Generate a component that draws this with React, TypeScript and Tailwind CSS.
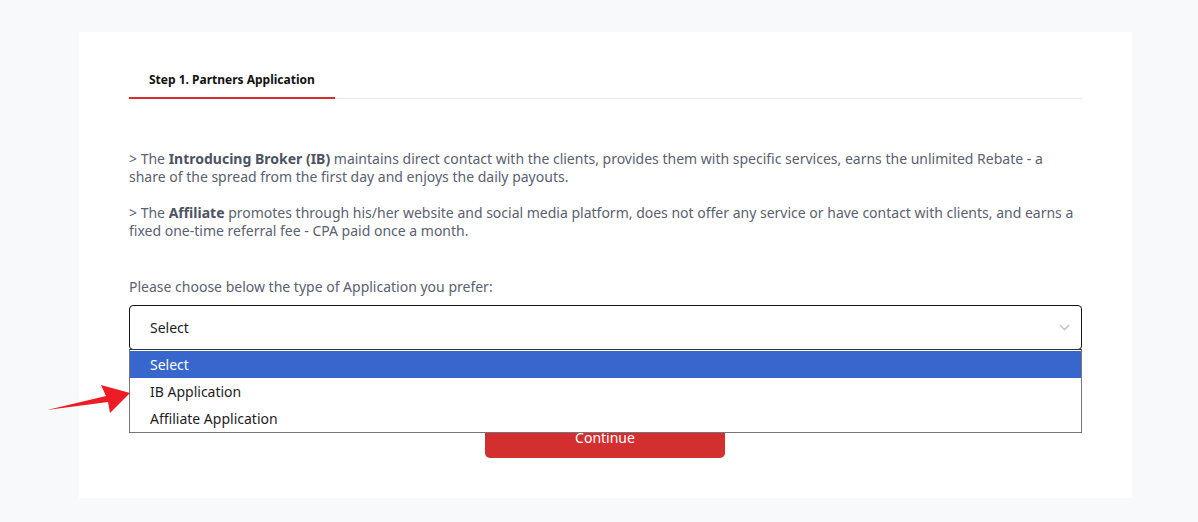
import { ChevronDown } from "lucide-react"

const options = ["Select", "IB Application", "Affiliate Application"]

export default function App() {
  return (
    <div
      className="relative min-h-[522px] bg-[#f8f9fb] pt-[32px] pb-[25px]"
      style={{ fontFamily: '"Noto Sans", "Open Sans", sans-serif' }}
    >
      <div className="ml-[79px] w-[1053px] bg-white px-[50px] pt-[40px] pb-[40px]">
        {/* tabs */}
        <div className="flex border-b border-[#e8e8ec]">
          <div className="-mb-px w-[206px] border-b-2 border-[#d32f2f] px-5 pb-[9px] text-[12px] font-bold leading-[16px] text-[#111]">
            Step 1. Partners Application
          </div>
        </div>

        <div className="mt-[51px] text-[14px] leading-[17.5px] text-[#5a6170]">
          <p>
            &gt; The <b className="font-bold text-[#4d5361]">Introducing Broker (IB)</b> maintains direct contact with the clients, provides them with specific services, earns the unlimited Rebate - a share of the spread from the first day and enjoys the daily payouts.
          </p>
          <p className="mt-[19px]">
            &gt; The <b className="font-bold text-[#4d5361]">Affiliate</b> promotes through his/her website and social media platform, does not offer any service or have contact with clients, and earns a fixed one-time referral fee - CPA paid once a month.
          </p>
        </div>

        <label className="mt-[39px] block text-[14px] leading-[18px] text-[#5a6170]">
          Please choose below the type of Application you prefer:
        </label>

        <div className="relative mt-[9px]">
          <div className="flex h-[45px] items-center justify-between rounded-[4px] border border-[#111] pl-[20px] pr-[8px] text-[14px] text-[#1d1d1f]">
            <span>Select</span>
            <ChevronDown className="h-[17px] w-[17px] text-[#c3c7d2]" strokeWidth={2} />
          </div>

          {/* open dropdown list */}
          <ul className="absolute top-[44px] left-0 right-0 z-10 border border-[#767676] border-t-[#333] bg-white pt-px text-[14px] text-[#1d1d1f]">
            {options.map((o, i) => (
              <li
                key={o}
                className={
                  i === 0
                    ? "flex h-[27px] items-center bg-[#3766cd] pl-[20px] text-white"
                    : "flex h-[27px] items-center pl-[20px]"
                }
              >
                {o}
              </li>
            ))}
          </ul>
        </div>

        <div className="mt-[66px] flex justify-center">
          <button className="-ml-px h-[42px] w-[240px] rounded-[5px] bg-[#d32f2f] text-[14px] text-white">
            Continue
          </button>
        </div>
      </div>

      {/* annotation arrow */}
      <svg className="absolute left-0 top-0 z-20" width="1198" height="522" viewBox="0 0 1198 522">
        <polygon
          points="47,410 106,396 101,385 130,393 110,413 108,402"
          fill="#ee1c25"
        />
      </svg>
    </div>
  )
}
